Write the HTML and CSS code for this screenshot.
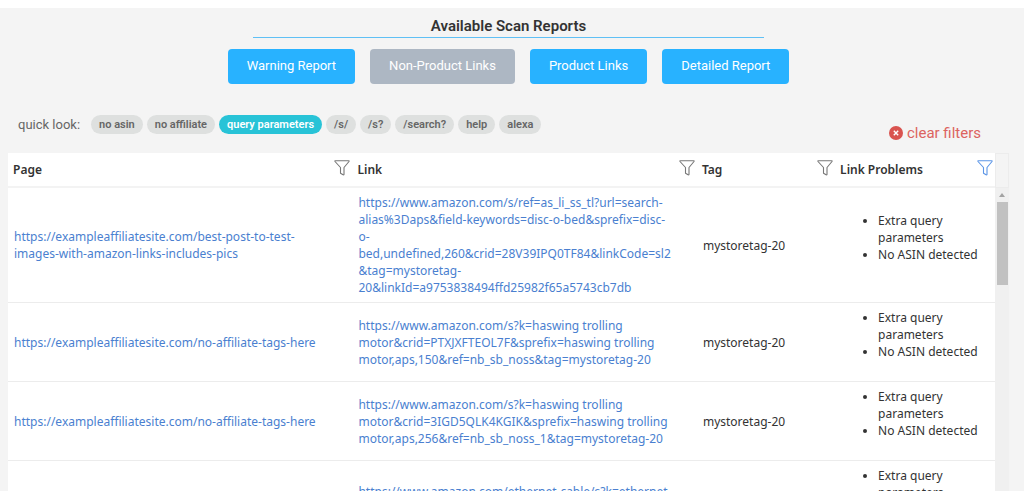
FILE: index.html
```html
<!DOCTYPE html>
<html lang="en">
<head>
<meta charset="utf-8">
<title>Available Scan Reports</title>
<link rel="stylesheet" href="styles.css">
</head>
<body>
<svg class="sprite" aria-hidden="true">
  <symbol id="funnel" viewBox="0 0 16 16">
    <path d="M1 1.500q-.5-.8.5-.8h13q1 0 .5.800L10 7.500v6.700q0 1-.9.600L6.500 13.200V7.500z" fill="none" stroke="currentColor" stroke-width="1.100" stroke-linejoin="round"/>
  </symbol>
</svg>
<main class="panel">
  <h1 class="title">Available Scan Reports</h1>
  <nav class="reports">
    <button class="report" type="button">Warning Report</button>
    <button class="report report-current" type="button">Non-Product Links</button>
    <button class="report" type="button">Product Links</button>
    <button class="report" type="button">Detailed Report</button>
  </nav>
  <div class="toolbar">
    <div class="quick">
      <span class="quick-label">quick look:</span>
      <button class="chip" type="button">no asin</button>
      <button class="chip" type="button">no affiliate</button>
      <button class="chip chip-active" type="button">query parameters</button>
      <button class="chip" type="button">/s/</button>
      <button class="chip" type="button">/s?</button>
      <button class="chip" type="button">/search?</button>
      <button class="chip" type="button">help</button>
      <button class="chip" type="button">alexa</button>
    </div>
    <button class="clear" type="button">
      <svg class="clear-icon" viewBox="0 0 14 14" aria-hidden="true"><circle cx="7" cy="7" r="7" fill="#d9534f"/><path d="M4.800 4.800l4.400 4.400M9.200 4.800l-4.400 4.400" stroke="#fff" stroke-width="1.400"/></svg>
      clear filters
    </button>
  </div>
  <div class="grid">
    <div class="viewport">
      <table class="links">
        <colgroup><col class="col-page"><col class="col-link"><col class="col-tag"><col class="col-problems"></colgroup>
        <thead>
          <tr>
            <th scope="col"><div class="head">Page<button class="filter" type="button" aria-label="Filter Page"><svg><use href="#funnel"/></svg></button></div></th>
            <th scope="col"><div class="head">Link<button class="filter" type="button" aria-label="Filter Link"><svg><use href="#funnel"/></svg></button></div></th>
            <th scope="col"><div class="head">Tag<button class="filter" type="button" aria-label="Filter Tag"><svg><use href="#funnel"/></svg></button></div></th>
            <th scope="col"><div class="head">Link Problems<button class="filter filter-on" type="button" aria-label="Filter Link Problems"><svg><use href="#funnel"/></svg></button></div></th>
          </tr>
        </thead>
        <tbody>
          <tr>
            <td class="url"><a href="#">https://exampleaffiliatesite.com/best-post-to-test-images-with-amazon-links-includes-pics</a></td>
            <td class="url"><a href="#">https://www.amazon.com/s/ref=as_li_ss_tl?url=search-alias%3Daps&amp;field-keywords=disc-o-bed&amp;sprefix=disc-o-bed,undefined,260&amp;crid=28V39IPQ0TF84&amp;linkCode=sl2&amp;tag=mystoretag-20&amp;linkId=a9753838494ffd25982f65a5743cb7db</a></td>
            <td>mystoretag-20</td>
            <td><ul><li>Extra query parameters</li><li>No ASIN detected</li></ul></td>
          </tr>
          <tr>
            <td class="url"><a href="#">https://exampleaffiliatesite.com/no-affiliate-tags-here</a></td>
            <td class="url"><a href="#">https://www.amazon.com/s?k=haswing trolling motor&amp;crid=PTXJXFTEOL7F&amp;sprefix=haswing trolling motor,aps,150&amp;ref=nb_sb_noss&amp;tag=mystoretag-20</a></td>
            <td>mystoretag-20</td>
            <td><ul><li>Extra query parameters</li><li>No ASIN detected</li></ul></td>
          </tr>
          <tr>
            <td class="url"><a href="#">https://exampleaffiliatesite.com/no-affiliate-tags-here</a></td>
            <td class="url"><a href="#">https://www.amazon.com/s?k=haswing trolling motor&amp;crid=3IGD5QLK4KGIK&amp;sprefix=haswing trolling motor,aps,256&amp;ref=nb_sb_noss_1&amp;tag=mystoretag-20</a></td>
            <td>mystoretag-20</td>
            <td><ul><li>Extra query parameters</li><li>No ASIN detected</li></ul></td>
          </tr>
          <tr>
            <td class="url"></td>
            <td class="url"><a href="#">https://www.amazon.com/ethernet-cable/s?k=ethernet cable</a></td>
            <td></td>
            <td><ul><li>Extra query parameters</li><li>No ASIN detected</li></ul></td>
          </tr>
        </tbody>
      </table>
    </div>
    <div class="gutter">
      <div class="gutter-head"></div>
      <div class="track">
        <svg class="arrow" viewBox="0 0 6 4" aria-hidden="true"><path d="M0 4l3-4 3 4z" fill="#a3a3a3"/></svg>
        <div class="thumb"></div>
      </div>
    </div>
  </div>
</main>
</body>
</html>
```
FILE: styles.css
```css
* { box-sizing: border-box; }
body {
  margin: 0;
  height: 100vh;
  overflow: hidden;
  padding-top: 8px;
  background: #fff;
  font-family: Roboto, sans-serif;
}
button {
  border: 0;
  padding: 0;
  background: none;
  font: inherit;
  color: inherit;
  cursor: pointer;
}
.sprite { position: absolute; width: 0; height: 0; }
.panel {
  display: flex;
  flex-direction: column;
  height: 100%;
  padding: 7px 15px 0 8px;
  background: #f4f4f4;
}
.title {
  align-self: center;
  width: 51%;
  margin: 0;
  border-bottom: 1px solid #5fc0f5;
  font-size: 15px;
  font-weight: 600;
  line-height: 22px;
  text-align: center;
  color: #333;
}
.reports {
  display: flex;
  justify-content: center;
  gap: 15px;
  margin-top: 11px;
}
.report {
  height: 35px;
  padding: 0 19px 2px;
  border-radius: 4px;
  background: #28b2ff;
  font-size: 13px;
  color: #fff;
}
.report-current { background: #adb7c3; }
.toolbar {
  display: flex;
  justify-content: space-between;
  margin-top: 30px;
  height: 39px;
  padding: 0 28px 0 10px;
}
.quick {
  display: flex;
  align-items: center;
  gap: 4px;
  height: 21px;
}
.quick-label { margin-right: 7px; font-size: 13px; color: #666; }
.chip {
  height: 19px;
  padding: 0 8px;
  border-radius: 10px;
  background: #dee0df;
  font-size: 11px;
  font-weight: 600;
  color: #666;
}
.chip-active { background: #28c3d7; color: #fff; }
.clear {
  display: flex;
  align-items: center;
  align-self: flex-end;
  gap: 4px;
  height: 40px;
  font-size: 15px;
  color: #dc6360;
}
.clear-icon { width: 14px; height: 14px; }
.grid {
  display: flex;
  flex: 1;
  min-height: 0;
  font-family: "Noto Sans", sans-serif;
  font-size: 12px;
  line-height: 17px;
  color: #333;
}
.viewport { flex: 1; overflow: hidden; background: #fff; }
.links { width: 100%; table-layout: fixed; border-collapse: collapse; }
.col-page, .col-link { width: 34.9%; }
.col-tag { width: 14%; }
.col-problems { width: 16.2%; }
th {
  height: 34px;
  padding: 0 2px 0 5px;
  border-bottom: 2px solid #f3f3f3;
  font-size: 12px;
  font-weight: 600;
  text-align: left;
}
.head { display: flex; align-items: center; justify-content: space-between; }
.filter { height: 20px; color: #777; }
.filter-on { color: #5b95e6; }
.filter svg { display: block; width: 16px; height: 16px; margin-bottom: 4px; }
td {
  padding: 6px;
  border-bottom: 1px solid #ececec;
  overflow-wrap: break-word;
}
td.url { padding-right: 23px; }
a { color: #4a7fd0; text-decoration: none; }
ul { margin: 0 0 15px; padding-left: 37px; }
.gutter { display: flex; flex-direction: column; width: 14px; }
.gutter-head { height: 35px; border: 1px solid #ececec; }
.track {
  display: flex;
  flex: 1;
  flex-direction: column;
  align-items: center;
  gap: 5px;
  padding-top: 5px;
  background: #f0f0f0;
}
.arrow { width: 6px; height: 4px; }
.thumb { width: 11px; height: 83px; background: #c1c1c1; }
```
